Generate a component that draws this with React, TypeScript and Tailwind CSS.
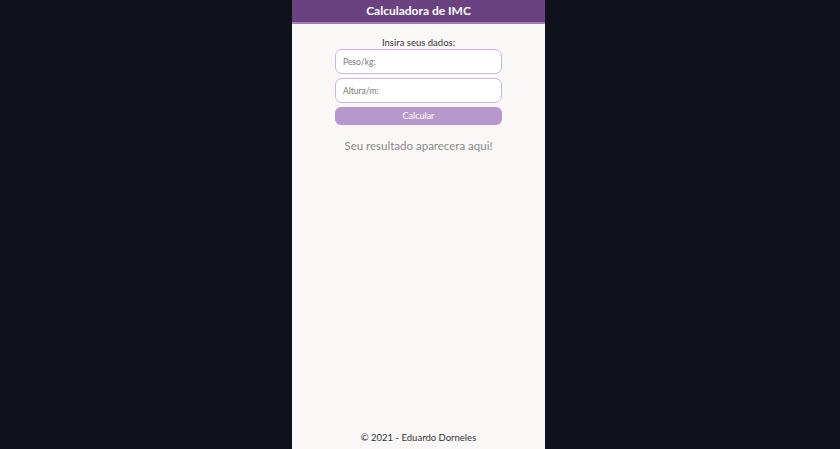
export default function App() {
  return (
    <div className="flex min-h-screen justify-center bg-[#0f121a] font-['Lato',sans-serif]">
      <div className="mr-[3px] flex h-[449px] w-[253px] flex-col bg-[#faf8f7]">
        <header className="flex h-[24px] items-center justify-center border-b-2 border-[#a07fb4] bg-[#6a4181]">
          <h1 className="text-[12px] font-bold text-white">Calculadora de IMC</h1>
        </header>
        <main className="flex flex-1 flex-col items-center pt-[13px]">
          <p className="text-[9.5px] leading-[12px] text-[#333]">Insira seus dados:</p>
          <div className="flex w-[167px] flex-col gap-[4px]">
            <input
              placeholder="Peso/kg:"
              className="h-[25px] rounded-[7px] border border-[#cdb3df] bg-white px-[7px] text-[8.5px] text-[#555] placeholder:text-[#777] outline-none"
            />
            <input
              placeholder="Altura/m:"
              className="h-[25px] rounded-[7px] border border-[#cdb3df] bg-white px-[7px] text-[8.5px] text-[#555] placeholder:text-[#777] outline-none"
            />
            <button className="h-[18px] rounded-[6px] bg-[#b798cc] text-[9px] text-white">Calcular</button>
          </div>
          <p className="mt-[12px] text-[11.5px] text-[#8a8a8a]">Seu resultado aparecera aqui!</p>
        </main>
        <footer className="pb-[1px] text-center text-[9.5px] leading-[20px] text-[#333]">© 2021 - Eduardo Dorneles</footer>
      </div>
    </div>
  );
}
